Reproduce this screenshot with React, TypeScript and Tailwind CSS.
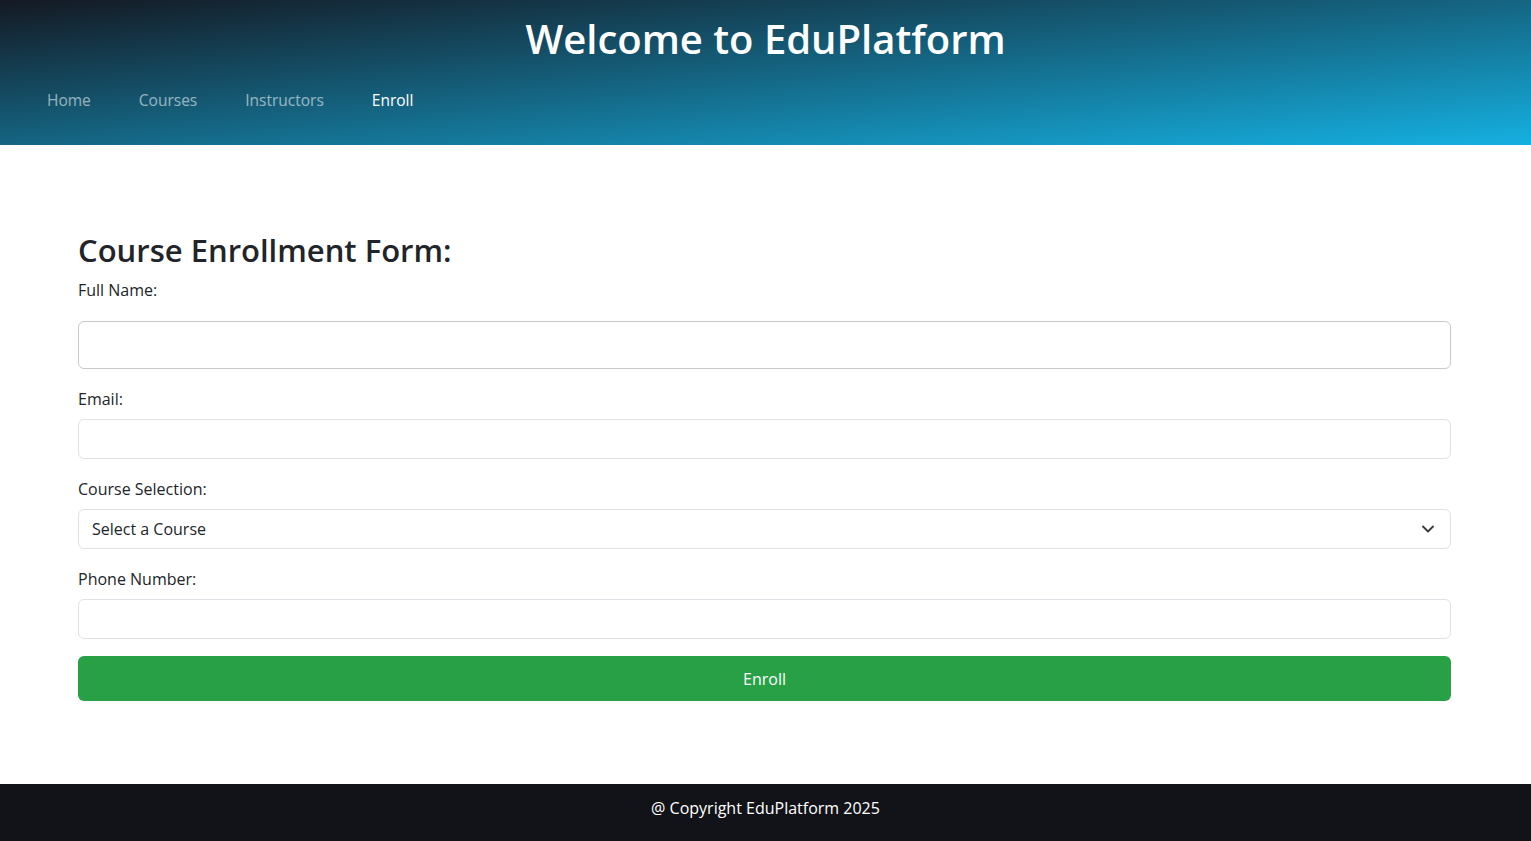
import React from "react";

export default function App() {
  const font = { fontFamily: '"Open Sans", "Noto Sans", sans-serif' };
  return (
    <div style={font} className="min-h-[841px] flex flex-col bg-white text-[#212529]">
      <header className="h-[145px] bg-[linear-gradient(to_bottom_right,#141923,#15b0e1)] flex flex-col">
        <h1 className="pt-[11px] text-center text-white text-[40px] leading-[56px] font-semibold">
          Welcome to EduPlatform
        </h1>
        <nav className="mt-[21px] pl-[47px] flex gap-[48px] text-[15.5px] leading-[24px]">
          <a className="text-white/55">Home</a>
          <a className="text-white/55">Courses</a>
          <a className="text-white/55">Instructors</a>
          <a className="text-white">Enroll</a>
        </nav>
      </header>
      <main className="flex-1 pl-[78px] pr-[80px] pt-[84px]">
        <h2 className="text-[31px] leading-[42px] font-semibold">Course Enrollment Form:</h2>
        <label className="block mt-[7px] text-[16px] leading-[24px]">Full Name:</label>
        <div className="mt-[19px] h-[48px] rounded-[6px] border border-[#c9c9c9]" />
        <label className="block mt-[18px] text-[16px] leading-[24px]">Email:</label>
        <div className="mt-[8px] h-[40px] rounded-[6px] border border-[#dee2e6]" />
        <label className="block mt-[18px] text-[16px] leading-[24px]">Course Selection:</label>
        <div className="mt-[8px] h-[40px] rounded-[6px] border border-[#dee2e6] flex items-center justify-between pl-[13px] pr-[16px]">
          <span className="text-[16px]">Select a Course</span>
          <svg width="12" height="8" viewBox="0 0 12 8" fill="none">
            <path d="M1 1.5l5 5 5-5" stroke="#343a40" strokeWidth="1.8" strokeLinecap="round" strokeLinejoin="round" />
          </svg>
        </div>
        <label className="block mt-[18px] text-[16px] leading-[24px]">Phone Number:</label>
        <div className="mt-[8px] h-[40px] rounded-[6px] border border-[#dee2e6]" />
        <button className="mt-[17px] w-full h-[45px] rounded-[6px] bg-[#28a046] text-white text-[16px]">
          Enroll
        </button>
      </main>
      <footer className="h-[57px] bg-[#121318] text-white flex justify-center pt-[12px] text-[16px] leading-[24px]">
        @ Copyright EduPlatform 2025
      </footer>
    </div>
  );
}
